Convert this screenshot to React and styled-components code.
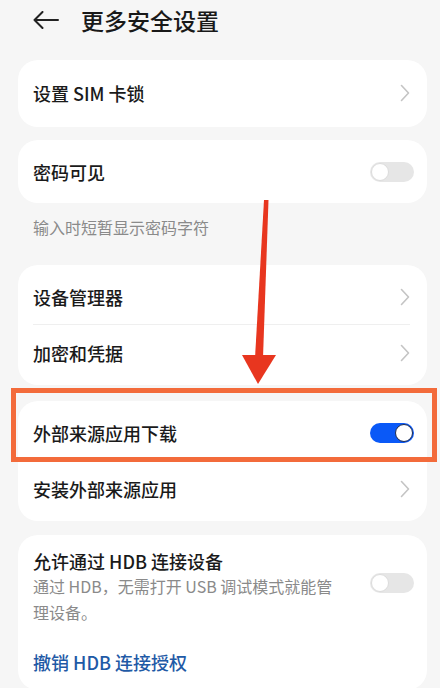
import React from 'react';
import styled, { createGlobalStyle } from 'styled-components';

const GlobalStyle = createGlobalStyle`
  html, body {
    margin: 0;
    padding: 0;
    background: #f6f6f6;
  }
  body {
    font-family: "Noto Sans CJK SC", "Noto Sans", sans-serif;
    color: #1a1a1a;
  }
`;

const Page = styled.div`
  position: relative;
  width: 440px;
  height: 688px;
  overflow: hidden;
  background: #f6f6f6;
`;

const Header = styled.div`
  height: 40px;
  display: flex;
  align-items: center;
  padding-left: 33px;
  gap: 22px;
`;

const Title = styled.div`
  font-size: 23px;
  font-weight: 500;
  color: #191919;
  line-height: 1;
`;

const Content = styled.div`
  display: flex;
  flex-direction: column;
  padding: 0 13px 0 18px;
`;

const Card = styled.div`
  background: #ffffff;
  border-radius: 20px;
  padding: ${(p) => p.$pad || '4px 0'};
  margin-top: ${(p) => p.$top || 0}px;
`;

const Row = styled.div`
  height: ${(p) => p.$h || 56}px;
  display: flex;
  align-items: center;
  justify-content: space-between;
  padding: 0 17px 0 15px;
  position: relative;
  ${(p) =>
    p.$divider &&
    `&::after {
      content: '';
      position: absolute;
      left: 15px;
      right: 17px;
      bottom: 0;
      height: 1px;
      background: #efefef;
    }`}
`;

const Label = styled.span`
  font-size: 18px;
  font-weight: 500;
  color: ${(p) => p.$color || '#1a1a1a'};
  line-height: 24px;
`;

const Hint = styled.div`
  font-size: 16px;
  color: #8a8a8a;
  line-height: 22px;
  padding: 13px 15px 0;
`;

const TextBlock = styled.div`
  display: flex;
  flex-direction: column;
  max-width: 310px;
`;

const Sub = styled.div`
  font-size: 16px;
  color: #8a8a8a;
  line-height: 26px;
`;

const Block = styled.div`
  display: flex;
  align-items: center;
  justify-content: space-between;
  padding: 14px 13px 9px 15px;
`;

const Track = styled.div`
  width: 44px;
  height: 20px;
  border-radius: 10px;
  background: ${(p) => (p.$on ? '#0a59f7' : '#e6e6e6')};
  display: flex;
  align-items: center;
  justify-content: ${(p) => (p.$on ? 'flex-end' : 'flex-start')};
  padding: 0 1px;
  box-sizing: border-box;
  margin-right: ${(p) => (p.$inRow ? -4 : 0)}px;
  margin-top: ${(p) => (p.$up ? -8 : 0)}px;
`;

const Knob = styled.div`
  width: 18px;
  height: 18px;
  border-radius: 50%;
  background: #ffffff;
  box-sizing: border-box;
  border: 1.5px solid ${(p) => (p.$on ? '#1d2b4f' : '#dcdcdc')};
`;

const Highlight = styled.div`
  position: absolute;
  left: 11px;
  top: 388px;
  width: 426px;
  height: 74px;
  box-sizing: border-box;
  border: 5px solid #f36b3b;
`;

const Overlay = styled.svg`
  position: absolute;
  left: 0;
  top: 0;
  pointer-events: none;
`;

const Chevron = () => (
  <svg width="10" height="18" viewBox="0 0 10 18">
    <path d="M1.5 1.5 L8.5 9 L1.5 16.5" fill="none" stroke="#c4c4c4" strokeWidth="1.6" strokeLinecap="round" strokeLinejoin="round" />
  </svg>
);

const BackArrow = () => (
  <svg width="26" height="18" viewBox="0 0 26 18">
    <path d="M1.5 9 H25 M9.5 1 L1.5 9 L9.5 17" fill="none" stroke="#222" strokeWidth="2" strokeLinecap="round" strokeLinejoin="round" />
  </svg>
);

const Toggle = ({ on, inRow, up }) => (
  <Track $on={on} $inRow={inRow} $up={up}>
    <Knob $on={on} />
  </Track>
);

export default function App() {
  return (
    <Page>
      <GlobalStyle />
      <Header>
        <BackArrow />
        <Title>更多安全设置</Title>
      </Header>
      <Content>
        <Card $top={20} $pad="5px 0 6px">
          <Row>
            <Label>设置 SIM 卡锁</Label>
            <Chevron />
          </Row>
        </Card>
        <Card $top={13} $pad="4px 0 3px">
          <Row>
            <Label>密码可见</Label>
            <Toggle inRow />
          </Row>
        </Card>
        <Hint>输入时短暂显示密码字符</Hint>
        <Card $top={27}>
          <Row $divider>
            <Label>设备管理器</Label>
            <Chevron />
          </Row>
          <Row>
            <Label>加密和凭据</Label>
            <Chevron />
          </Row>
        </Card>
        <Card $top={16}>
          <Row>
            <Label>外部来源应用下载</Label>
            <Toggle on inRow />
          </Row>
          <Row>
            <Label>安装外部来源应用</Label>
            <Chevron />
          </Row>
        </Card>
        <Card $top={14} $pad="0">
          <Block>
            <TextBlock>
              <Label>允许通过 HDB 连接设备</Label>
              <Sub>通过 HDB，无需打开 USB 调试模式就能管理设备。</Sub>
            </TextBlock>
            <Toggle up />
          </Block>
          <Row>
            <Label $color="#1f5aa6">撤销 HDB 连接授权</Label>
          </Row>
        </Card>
      </Content>
      <Highlight />
      <Overlay width="440" height="688" viewBox="0 0 440 688">
        <polygon points="264,200 268.5,200 263,358 255,358" fill="#e8361f" />
        <polygon points="242,355 276,355 258,384" fill="#e8361f" />
      </Overlay>
    </Page>
  );
}
